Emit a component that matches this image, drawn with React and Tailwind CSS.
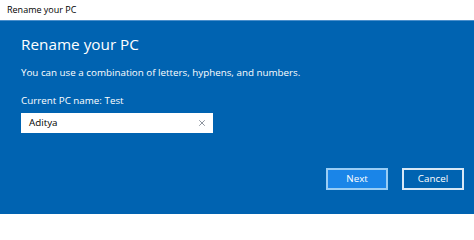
import { X } from 'lucide-react';

export default function App() {
    return (
        <div
            className="flex h-[214px] w-[474px] flex-col overflow-hidden bg-[#0063b1]"
            style={{ fontFamily: '"Open Sans", "Noto Sans", sans-serif' }}
        >
            <div className="flex h-[21px] shrink-0 items-center border-b border-[#4a8fcc] bg-white pl-[7px] text-[9px] text-black">
                Rename your PC
            </div>
            <div className="flex flex-1 flex-col px-[21px] text-white">
                <div className="mt-[13px] text-[15.3px] leading-[20px]">Rename your PC</div>
                <div className="mt-[12px] text-[9.8px] leading-[14px]">
                    You can use a combination of letters, hyphens, and numbers.
                </div>
                <div className="mt-[14px] text-[9.8px] leading-[14px]">Current PC name: Test</div>
                <div className="mt-[5px] flex h-[20px] w-[192px] items-center justify-between bg-white pl-[8px] pr-[6px] text-[9.8px] text-black">
                    <span>Aditya</span>
                    <X className="h-[10px] w-[10px] text-gray-600" strokeWidth={1.5} />
                </div>
                <div className="mt-auto mb-[24px] mr-[-11px] flex justify-end gap-[14px]">
                    <button className="h-[22px] w-[62px] border-2 border-[#99cdf5] bg-[#1a85e8] text-[9.8px] text-white">
                        Next
                    </button>
                    <button className="h-[22px] w-[62px] border-2 border-[#d7e8f6] bg-[#0063b1] text-[9.8px] text-white">
                        Cancel
                    </button>
                </div>
            </div>
        </div>
    );
}
